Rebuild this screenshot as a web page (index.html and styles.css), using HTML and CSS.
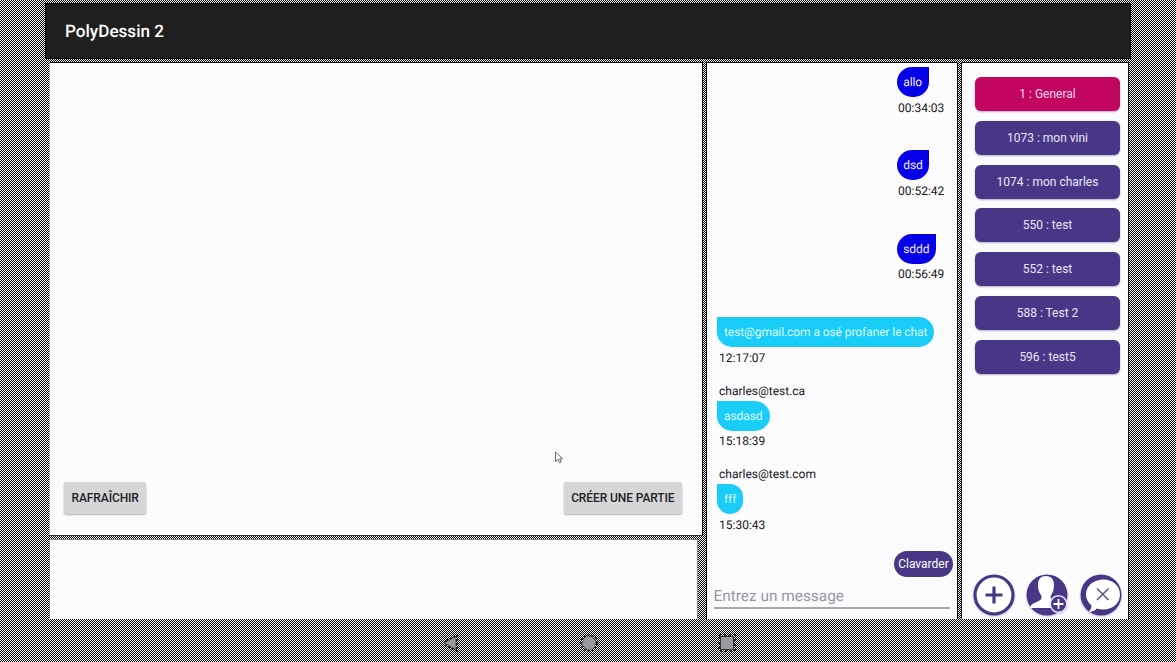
FILE: index.html
```html
<!DOCTYPE html>
<html lang="fr">
<head>
<meta charset="utf-8">
<title>PolyDessin 2</title>
<link rel="stylesheet" href="styles.css">
</head>
<body>
<div class="app">
  <header class="bar">PolyDessin 2</header>
  <main class="panels">
    <div class="left">
      <section class="panel games">
        <button class="btn">RAFRAÎCHIR</button>
        <button class="btn">CRÉER UNE PARTIE</button>
      </section>
      <section class="panel lower"></section>
    </div>
    <section class="panel chat">
      <div class="messages">
        <div class="msg own"><span class="name"></span><span class="bubble">allo</span><span class="time">00:34:03</span></div>
        <div class="msg own"><span class="name"></span><span class="bubble">dsd</span><span class="time">00:52:42</span></div>
        <div class="msg own"><span class="name"></span><span class="bubble">sddd</span><span class="time">00:56:49</span></div>
        <div class="msg"><span class="name"></span><span class="bubble">test@gmail.com a osé profaner le chat</span><span class="time">12:17:07</span></div>
        <div class="msg"><span class="name">charles@test.ca</span><span class="bubble">asdasd</span><span class="time">15:18:39</span></div>
        <div class="msg"><span class="name">charles@test.com</span><span class="bubble">fff</span><span class="time">15:30:43</span></div>
      </div>
      <button class="send">Clavarder</button>
      <div class="field">Entrez un message</div>
    </section>
    <section class="panel rooms">
      <button class="room active">1 : General</button>
      <button class="room">1073 : mon vini</button>
      <button class="room">1074 : mon charles</button>
      <button class="room">550 : test</button>
      <button class="room">552 : test</button>
      <button class="room">588 : Test 2</button>
      <button class="room">596 : test5</button>
      <div class="actions">
        <svg class="action" viewBox="0 0 42 42"><circle cx="21" cy="21" r="19" fill="#fff" stroke="#483786" stroke-width="3.2"/><path d="M21 12.5v17M12.5 21h17" stroke="#483786" stroke-width="3.2"/></svg>
        <svg class="action" viewBox="0 0 42 42"><circle cx="21" cy="21" r="20.5" fill="#483786"/><path d="M20 2c-5 0-8 3.400-8 8.500 0 3 .3 5.500 1.500 8 .6 1.300 1.800 2.500 2 4 .2 2.200-.6 3.500-3 4.500C8.500 29 5 30 3.800 34h24.500v-5.800c-2.500-1-3.800-2.500-3.700-5.200.1-1.500 1.200-2.700 1.900-4.200 1.200-2.500 1.400-5 1.400-8C28 5.500 25.500 2 20 2z" fill="#fff"/><circle cx="32.500" cy="30" r="8.300" fill="#483786" stroke="#e8e3f7" stroke-width="1.500"/><path d="M32.500 25v10M27.500 30h10" stroke="#fff" stroke-width="1.800"/></svg>
        <svg class="action" viewBox="0 0 42 42"><circle cx="21" cy="21" r="20.500" fill="#483786"/><path d="M23.500 5.500C13.500 5.500 6 12 6 20.500c0 4.500 2.200 8.200 5.400 10.800 .3 2.500-.7 4.500-2.700 6.700 3.300-.2 6-1.300 8.200-3.500 2 .7 4.200 1 6.600 1 9.500 0 16.500-6.500 16.500-15s-7-15-16.500-15z" fill="#fff"/><path d="M17 14.500l11.500 11.500M28.500 14.500l-11.500 11.500" stroke="#665f78" stroke-width="1.700"/></svg>
      </div>
    </section>
  </main>
  <nav class="nav">
    <svg width="16" height="18" viewBox="0 0 16 18"><path d="M3 6L14 1v16L3 12z" fill="none" stroke="#000" stroke-width="1.500" stroke-dasharray="2 2"/><path d="M1 9L13 2.500v13z" fill="#9b99a0" stroke="#222" stroke-width=".6"/></svg>
    <svg width="18" height="18" viewBox="0 0 18 18"><circle cx="9" cy="9" r="8" fill="none" stroke="#000" stroke-width="1.500" stroke-dasharray="2 2"/><circle cx="9" cy="9" r="6.500" fill="#9b99a0" stroke="#444" stroke-width=".5"/></svg>
    <svg width="18" height="18" viewBox="0 0 18 18"><path d="M1 1h16v16H1z" fill="none" stroke="#000" stroke-width="1.500" stroke-dasharray="2 3"/><path d="M2.500 2.500h13v13h-13z" fill="#9b99a0" stroke="#333" stroke-width="1"/></svg>
  </nav>
  <svg class="cursor" viewBox="0 0 10 13"><path d="M1.500 1v9.500L4 8.300l1.600 3.400 1.600-.8L5.700 7.700H8.500z" fill="#fff" stroke="#55535a" stroke-width=".9"/></svg>
</div>
</body>
</html>
```
FILE: styles.css
```css
* { box-sizing: border-box; }
body {
  margin: 0;
  font-family: Roboto, "Liberation Sans", sans-serif;
  font-size: 12px;
  color: #17161b;
  text-rendering: geometricPrecision;
}
button { border: 0; padding: 0; font: inherit; }
.app {
  position: relative;
  width: 1176px;
  height: 662px;
  overflow: hidden;
  padding: 3px 45px 0 45px;
  background: conic-gradient(#000 25%, #fff 0 50%, #000 0 75%, #fff 0) 0 0 / 2px 2px;
}
.bar {
  width: 1086px;
  height: 56px;
  padding: 1px 19px 0;
  border: 1px solid #080808;
  border-left: 1px dashed #000;
  background: conic-gradient(#1c1c1c 25%, #232323 0 50%, #1c1c1c 0 75%, #232323 0) 0 0 / 2px 2px;
  color: #fff;
  font-size: 17.100px;
  font-weight: 500;
  line-height: 54px;
}
.panels {
  display: grid;
  grid-template-columns: 654px 252px 168px;
  column-gap: 3px;
  height: 557px;
  margin: 3px 0 0 4px;
}
.panel {
  background: conic-gradient(#fefefe 25%, #f9f9fb 0 50%, #fefefe 0 75%, #f9f9fb 0) 0 0 / 4px 4px;
  border: 1px solid #111;
  border-bottom: 0;
}
.left {
  display: grid;
  grid-template-rows: 474px 80px;
  row-gap: 3px;
}
.games {
  display: flex;
  align-items: flex-end;
  justify-content: space-between;
  padding: 0 20px 21px 14px;
  border-left-color: #aaa;
  border-bottom: 1px solid #333;
}
.btn {
  height: 32px;
  padding: 0 7.500px 1px;
  border-radius: 2px;
  background: #d6d6d7;
  box-shadow: 0 1px 2px rgba(0, 0, 0, .3);
  color: #222126;
  font-weight: 500;
  letter-spacing: -.1px;
}
.lower { width: 649px; border-color: #888; }
.chat { display: flex; flex-direction: column; }
.messages {
  display: flex;
  flex-direction: column;
  height: 480px;
  overflow: hidden;
}
.msg {
  display: flex;
  flex: none;
  flex-direction: column;
  align-items: flex-start;
  height: 83.400px;
  padding-left: 10px;
}
.msg:first-child { margin-top: -17px; }
.own { padding-left: 189.500px; }
.time { height: 16px; margin: 2.600px 0 0 2px; line-height: 16px; }
.name { height: 16px; margin: 4px 0 1px 2px; line-height: 15px; }
.own .time { margin-left: 1.500px; }
.bubble {
  flex: none;
  height: 30px;
  padding: 1px 7px 0;
  border-radius: 0 15px 15px 15px;
  background: #19cdf8;
  color: #d9faff;
  line-height: 29.500px;
  letter-spacing: -.08px;
}
.own .bubble {
  padding: 1px 6.700px 0;
  border-radius: 15px 0 15px 15px;
  background: #0500e8;
  color: #eeeaff;
}
.send {
  align-self: flex-end;
  width: 59px;
  height: 26px;
  margin: 8px 4px 0 0;
  border-radius: 13px;
  background: #483786;
  color: #fff;
}
.field {
  width: 236px;
  height: 31px;
  margin: 1px 0 0 6.500px;
  border-bottom: 2px solid #aaa8ae;
  color: #98969e;
  font-size: 15.400px;
  line-height: 37px;
}
.rooms {
  display: flex;
  flex-direction: column;
  gap: 9.750px;
  padding: 14px 8px 0 13px;
}
.room {
  width: 145px;
  height: 34px;
  flex: none;
  border-radius: 6px;
  background: #483786;
  box-shadow: 0 1px 2px rgba(72, 55, 134, .4);
  color: #e8e6fa;
}
.room.active { background: #c2055e; color: #f2d5ee; }
.actions {
  display: flex;
  justify-content: space-between;
  width: 149.500px;
  margin: auto 0 3.500px -2.500px;
}
.action { width: 42px; height: 42px; filter: drop-shadow(0 1px 1px rgba(72, 55, 134, .3)); }
.nav {
  display: flex;
  justify-content: space-between;
  width: 293px;
  margin: 15px 0 0 398px;
}
.cursor { position: absolute; left: 554px; top: 451px; width: 10px; height: 13px; }
```
